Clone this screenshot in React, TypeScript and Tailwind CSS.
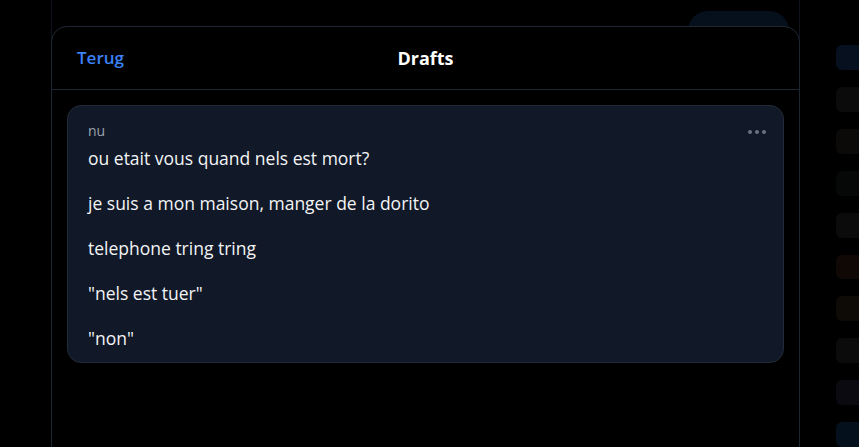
const lines = [
  "ou etait vous quand nels est mort?",
  "je suis a mon maison, manger de la dorito",
  "telephone tring tring",
  "\"nels est tuer\"",
  "\"non\"",
];

const sideTiles = [
  "bg-[#06101f]",
  "bg-[#0b0b0b]",
  "bg-[#0c0a08]",
  "bg-[#050806]",
  "bg-[#0b0b0b]",
  "bg-[#0f0805]",
  "bg-[#0e0a06]",
  "bg-[#0b0b0b]",
  "bg-[#0a0a10]",
  "bg-[#04101c]",
];

export default function App() {
  return (
    <div
      className="relative h-[447px] w-[859px] overflow-hidden bg-black"
      style={{ fontFamily: '"Open Sans", "Noto Sans", sans-serif' }}
    >
      {/* dimmed page behind the sheet */}
      <div className="flex h-full">
        <div className="w-[51px] shrink-0" />
        <div className="relative mt-[-20px] h-[500px] w-[749px] shrink-0 rounded-2xl border border-[#0f141c]">
          <div className="absolute right-[10px] top-[30px] h-[40px] w-[101px] rounded-full bg-[#06101d]" />
        </div>
        <div className="ml-[36px] flex shrink-0 flex-col gap-[17px] pt-[45px]">
          {sideTiles.map((c, i) => (
            <div key={i} className={`h-[25px] w-[30px] rounded-md ${c}`} />
          ))}
        </div>
      </div>

      {/* sheet */}
      <div className="absolute left-[51px] top-[26px] h-[440px] w-[749px] rounded-t-2xl border border-[#1f2633] bg-black">
        <div className="relative flex h-[63px] items-center border-b border-[#1f2633] px-[25px]">
          <button className="text-[17px] font-semibold text-[#3b82f6]">Terug</button>
          <h1 className="absolute left-1/2 -translate-x-1/2 text-[18px] font-bold text-white">
            Drafts
          </h1>
        </div>

        <div className="p-[15px]">
          <div className="relative rounded-[14px] border border-[#222a37] bg-[#111827] px-[20px] pb-[10px] pt-[16px]">
            <div className="text-[14px] leading-[18px] text-[#9ca3af]">nu</div>
            <div className="absolute right-[17px] top-[24px] flex gap-[3px]">
              <span className="h-[4px] w-[4px] rounded-full bg-[#6b7280]" />
              <span className="h-[4px] w-[4px] rounded-full bg-[#6b7280]" />
              <span className="h-[4px] w-[4px] rounded-full bg-[#6b7280]" />
            </div>
            <div className="mt-[5px] flex flex-col gap-[18px]">
              {lines.map((l) => (
                <p key={l} className="text-[17.5px] leading-[27px] text-[#f3f4f6]">
                  {l}
                </p>
              ))}
            </div>
          </div>
        </div>
      </div>
    </div>
  );
}
